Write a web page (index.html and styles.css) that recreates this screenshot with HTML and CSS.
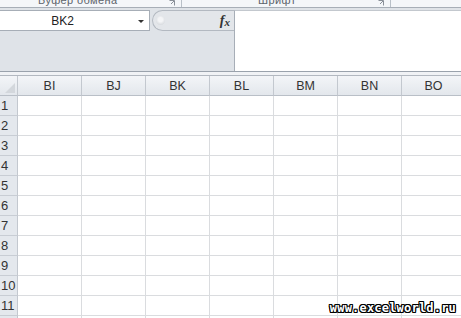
FILE: index.html
```html
<!DOCTYPE html>
<html lang="ru">
<head>
    <meta charset="UTF-8">
    <title>Excel</title>
    <link rel="stylesheet" href="styles.css">
</head>
<body>
    <div class="ribbon-groups">
        <div class="group group-clip">
            <span class="group-label">Буфер обмена</span>
            <svg class="launcher" width="6" height="6" viewBox="0 0 6 6"><path d="M0.5 0.5h5v5M2 4l3-3" fill="none" stroke="#8a9099" stroke-width="1"/></svg>
        </div>
        <div class="group group-font">
            <span class="group-label">Шрифт</span>
            <svg class="launcher" width="6" height="6" viewBox="0 0 6 6"><path d="M0.5 0.5h5v5M2 4l3-3" fill="none" stroke="#8a9099" stroke-width="1"/></svg>
        </div>
        <div class="group group-rest"></div>
    </div>

    <div class="formula-bar">
        <div class="fb-left">
            <div class="name-row">
                <div class="name-box">
                    <span class="cell-ref">BK2</span>
                    <span class="drop-arrow"></span>
                </div>
                <div class="fx-pill">
                    <span class="handle"></span>
                    <span class="fx"><i>f</i><sub>x</sub></span>
                </div>
            </div>
            <div class="fb-expand"></div>
        </div>
        <div class="formula-input"></div>
    </div>

    <div class="sheet" id="sheet">
        <div class="corner"></div>
        <div class="col-head">BI</div>
        <div class="col-head">BJ</div>
        <div class="col-head">BK</div>
        <div class="col-head">BL</div>
        <div class="col-head">BM</div>
        <div class="col-head">BN</div>
        <div class="col-head">BO</div>
    </div>

    <div class="watermark">www.excelworld.ru</div>

    <script>
        // строки 1..11, семь пустых ячеек в каждой (+ край 12-й строки)
        const sheet = document.getElementById('sheet');
        let html = '';
        for (let r = 1; r <= 12; r++) {
            html += `<div class="row-head">${r <= 11 ? r : ''}</div>`;
            for (let c = 0; c < 7; c++) {
                html += `<div class="cell"></div>`;
            }
        }
        sheet.insertAdjacentHTML('beforeend', html);
    </script>
</body>
</html>
```

FILE: styles.css
```css
body {
    margin: 0;
    width: 461px;
    height: 318px;
    overflow: hidden;
    position: relative;
    background: #f0f2f5;
    font-family: 'Liberation Sans', Arial, sans-serif;
    color: #333;
}

/* подписи групп ленты, видна только нижняя часть */
.ribbon-groups {
    display: flex;
    height: 7px;
    overflow: hidden;
    background: #f4f6f9;
    border-bottom: 1px solid #a7aeb7;
}

.group {
    position: relative;
    height: 7px;
    border-right: 1px solid #b9c0c8;
}

.group-clip {
    width: 181px;
}

.group-font {
    width: 208px;
}

.group-rest {
    flex: 1;
    border-right: none;
}

.group-label {
    display: block;
    margin-top: -6px;
    font-size: 11px;
    line-height: 13px;
    color: #5c636b;
    letter-spacing: 0.4px;
}

.group-clip .group-label {
    padding-left: 38px;
}

.group-font .group-label {
    padding-left: 76px;
}

.launcher {
    position: absolute;
    right: 6px;
    top: 0;
}

/* строка формул */
.formula-bar {
    display: flex;
    height: 61px;
    padding-top: 2px;
    background: #dfe3e8;
    border-bottom: 1px solid #9aa2ac;
}

.fb-left {
    width: 234px;
    display: flex;
    flex-direction: column;
}

.name-row {
    display: flex;
    height: 21px;
}

.name-box {
    width: 150px;
    box-sizing: border-box;
    background: #fff;
    border: 1px solid #a7aeb7;
    border-left: none;
    display: flex;
    align-items: center;
    position: relative;
}

.cell-ref {
    width: 100%;
    text-align: center;
    padding-right: 24px;
    font-size: 12px;
    color: #222;
}

.drop-arrow {
    position: absolute;
    right: 5px;
    top: 9px;
    border-left: 3px solid transparent;
    border-right: 3px solid transparent;
    border-top: 3px solid #333;
}

.fx-pill {
    flex: 1;
    margin-left: 2px;
    display: flex;
    align-items: center;
    justify-content: space-between;
    background: #e3e6ea;
    border: 1px solid #b3b9c1;
    border-right: none;
    border-radius: 11px 0 0 11px;
    padding: 0 4px 0 3px;
}

.handle {
    width: 9px;
    height: 9px;
    border-radius: 50%;
    background: radial-gradient(circle at 50% 40%, #f4f5f7 30%, #c9cdd2 100%);
}

.fx {
    font-family: 'Liberation Serif', serif;
    font-size: 14px;
    font-weight: bold;
    color: #333;
    line-height: 1;
}

.fx sub {
    font-size: 11px;
    vertical-align: -1px;
    font-style: italic;
}

.fb-expand {
    flex: 1;
}

.formula-input {
    flex: 1;
    background: #fff;
    border-left: 1px solid #a7aeb7;
    border-top: 1px solid #c3c8ce;
}

/* лист */
.sheet {
    display: grid;
    grid-template-columns: 18px repeat(7, 64px);
    grid-template-rows: 20px;
    grid-auto-rows: 20px;
    margin-top: 3px;
    background: #fff;
    border-top: 1px solid #b2b8c0;
}

.corner,
.col-head,
.row-head {
    box-sizing: border-box;
    background: linear-gradient(#f3f5f8, #e3e7ec);
    border-right: 1px solid #c3c8cf;
    border-bottom: 1px solid #b9bfc7;
    font-size: 12px;
    color: #333;
}

.corner {
    position: relative;
}

.corner::after {
    content: '';
    position: absolute;
    right: 2px;
    bottom: 2px;
    border-left: 10px solid transparent;
    border-bottom: 10px solid #d3d7dc;
}

.col-head {
    display: flex;
    align-items: center;
    justify-content: center;
    font-size: 12.5px;
}

.row-head {
    display: flex;
    align-items: center;
    padding-left: 1px;
    background: #e4e8ed;
    border-bottom-color: #c8cdd4;
    font-size: 13px;
}

.cell {
    box-sizing: border-box;
    border-right: 1px solid #dadcdf;
    border-bottom: 1px solid #dadcdf;
}

.watermark {
    position: absolute;
    right: 5px;
    bottom: 3px;
    font-family: 'DejaVu Sans Mono', monospace;
    font-weight: bold;
    font-size: 12px;
    letter-spacing: 0.2px;
    color: #fff;
    text-shadow: 1px 0 0 #000, -1px 0 0 #000, 0 1px 0 #000, 0 -1px 0 #000,
        1px 1px 0 #000, -1px -1px 0 #000, 1px -1px 0 #000, -1px 1px 0 #000;
}
```
